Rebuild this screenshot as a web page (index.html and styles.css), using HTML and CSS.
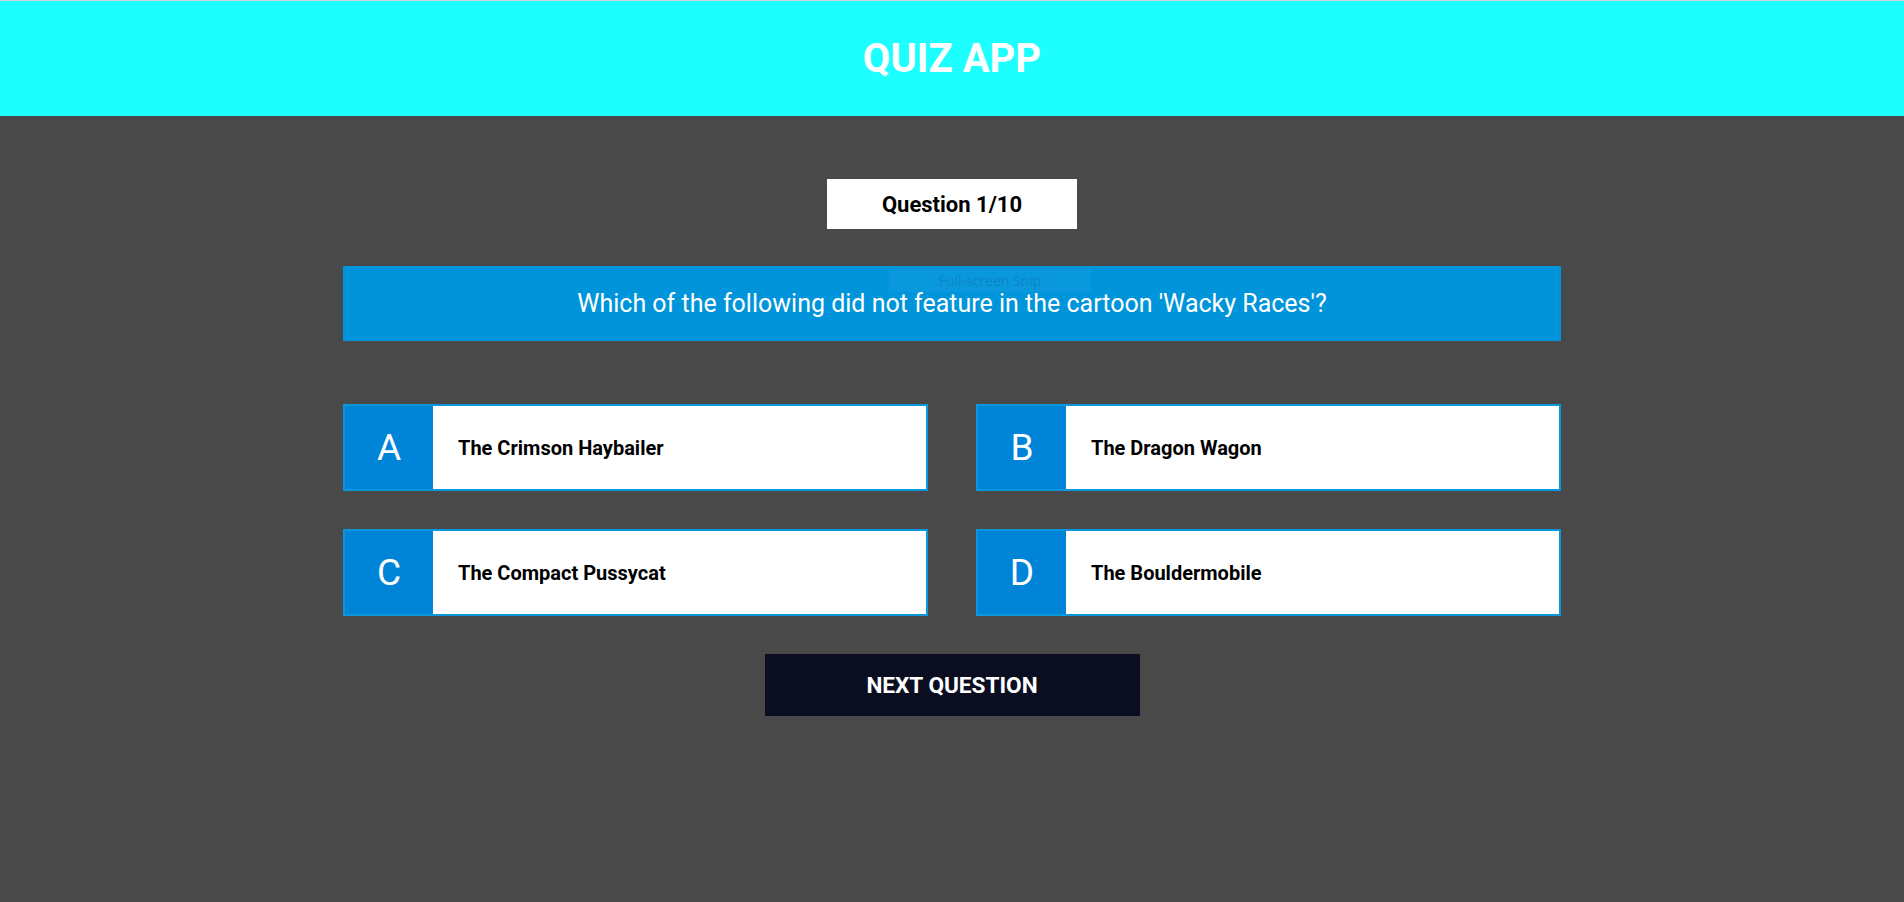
FILE: index.html
```html
<!DOCTYPE html>
<html lang="en">
<head>
<meta charset="utf-8">
<title>Quiz App</title>
<link rel="stylesheet" href="styles.css">
</head>
<body>
<header class="app-header">
  <h1 class="app-title">QUIZ APP</h1>
</header>
<main class="quiz">
  <div class="counter">Question 1/10</div>
  <div class="question">
    <span class="snip">Full-screen Snip</span>
    <p class="question-text">Which of the following did not feature in the cartoon 'Wacky Races'?</p>
  </div>
  <div class="options">
    <div class="option"><span class="letter">A</span><span class="answer">The Crimson Haybailer</span></div>
    <div class="option"><span class="letter">B</span><span class="answer">The Dragon Wagon</span></div>
    <div class="option"><span class="letter">C</span><span class="answer">The Compact Pussycat</span></div>
    <div class="option"><span class="letter">D</span><span class="answer">The Bouldermobile</span></div>
  </div>
  <button class="next">NEXT QUESTION</button>
</main>
</body>
</html>
```
FILE: styles.css
```css
* { box-sizing: border-box; }
html, body { margin: 0; padding: 0; }
body {
  background: #494949;
  font-family: Roboto, "Liberation Sans", sans-serif;
  min-height: 902px;
}
.app-header {
  height: 116px;
  border-top: 1px solid #d4d4d4;
  background: #1dffff;
  display: flex;
  align-items: center;
  justify-content: center;
}
.app-title {
  margin: 0;
  color: #fff;
  font-size: 40px;
  font-weight: 700;
}
.quiz {
  width: 1218px;
  margin: 0 auto;
  padding-top: 63px;
  display: flex;
  flex-direction: column;
  align-items: center;
}
.counter {
  width: 250px;
  height: 50px;
  background: #fff;
  color: #000;
  font-size: 22px;
  font-weight: 700;
  display: flex;
  align-items: center;
  justify-content: center;
}
.question {
  position: relative;
  margin-top: 37px;
  width: 100%;
  height: 75px;
  background: #0095da;
  display: flex;
  align-items: center;
  justify-content: center;
}
.question-text {
  margin: 0;
  color: #fff;
  font-size: 25px;
  font-weight: 400;
}
.snip {
  position: absolute;
  left: 546px;
  top: 3px;
  width: 202px;
  height: 23px;
  background: #0a98dc;
  color: #0a86c6;
  font-family: "Open Sans", sans-serif;
  font-size: 14px;
  display: flex;
  align-items: center;
  justify-content: center;
}
.options {
  margin-top: 63px;
  width: 100%;
  display: grid;
  grid-template-columns: 585px 585px;
  justify-content: space-between;
  row-gap: 38px;
}
.option {
  height: 87px;
  border: 2px solid #0a97dc;
  background: #fff;
  display: flex;
  align-items: stretch;
}
.letter {
  width: 88px;
  background: #0084d8;
  color: #fff;
  font-size: 37px;
  display: flex;
  align-items: center;
  justify-content: center;
}
.answer {
  padding-left: 25px;
  display: flex;
  align-items: center;
  color: #000;
  font-size: 20px;
  font-weight: 700;
}
.next {
  margin-top: 38px;
  width: 375px;
  height: 62px;
  border: none;
  background: #0b0e20;
  color: #fff;
  font-family: Roboto, "Liberation Sans", sans-serif;
  font-size: 22.6px;
  font-weight: 700;
  cursor: pointer;
}
```
